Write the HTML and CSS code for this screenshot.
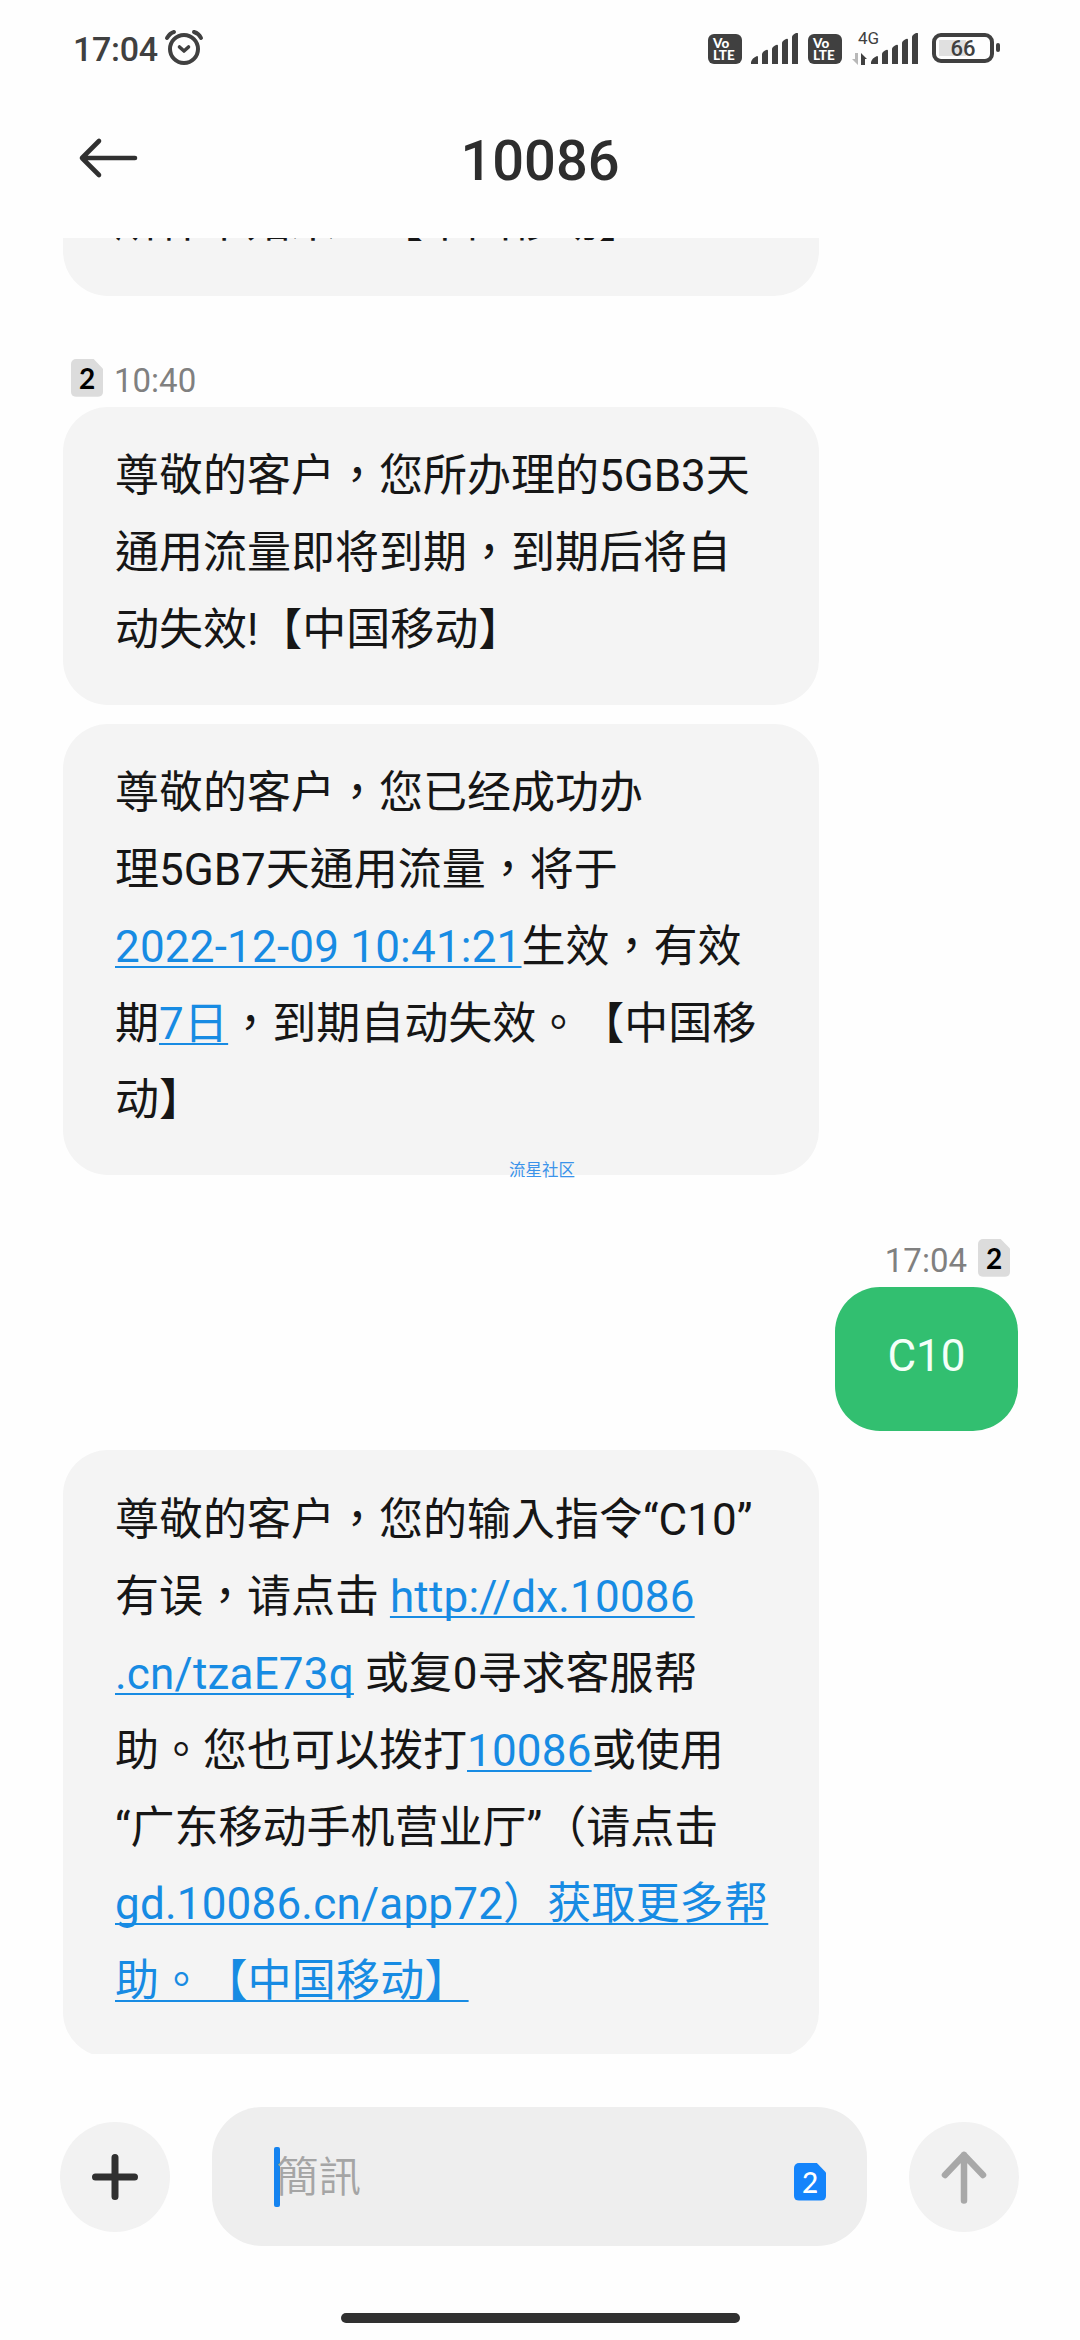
FILE: index.html
```
<!DOCTYPE html>
<html lang="zh-TW">
<head>
<meta charset="utf-8">
<title>10086</title>
<link rel="stylesheet" href="styles.css">
</head>
<body>
<div class="screen">
  <header class="status">
    <span class="clock">17:04</span>
    <svg class="alarm" width="42" height="40" viewBox="0 0 42 40" fill="none" stroke="#404040" stroke-linecap="round" stroke-linejoin="round"><circle cx="21" cy="21" r="14" stroke-width="4"/><path d="M16.500 19l4.500 4 4.500-4" stroke-width="3.600"/><path d="M4 10q3-5 7-6M31 4q5 1.500 7 6" stroke-width="4"/></svg>
    <div class="indicators">
      <span class="volte"><span>Vo</span><span>LTE</span></span>
      <svg class="bars" width="48" height="32" viewBox="0 0 48 32" fill="#404040"><path d="M0 31v-2q1-4 6-6q1 0 1 1v7zM11 31V21q0-2 4-4q2-1 2 1v13zM21 31V16q0-2 4-4q2-1 2 1v18zM31 31V10q0-2 4-4q2-1 2 1v24zM41 31V4q0-2 4-4q2-1 2 1v30z"/></svg>
      <span class="volte"><span>Vo</span><span>LTE</span></span>
      <div class="mobile">
        <svg width="16" height="12" viewBox="0 0 16 12"><path d="M6 0v12L0 6h3V0z" fill="#b8b8b8"/><path d="M9 12V0l6 6h-2v6z" fill="#404040"/></svg>
        <svg class="bars" width="48" height="32" viewBox="0 0 48 32" fill="#404040"><path d="M0 31v-2q1-4 6-6q1 0 1 1v7zM11 31V21q0-2 4-4q2-1 2 1v13zM21 31V16q0-2 4-4q2-1 2 1v18zM31 31V10q0-2 4-4q2-1 2 1v24zM41 31V4q0-2 4-4q2-1 2 1v30z"/></svg>
        <span class="net">4G</span>
      </div>
      <span class="battery"><span class="level">66</span></span><span class="nub"></span>
    </div>
  </header>
  <div class="titlebar">
    <svg width="60" height="42" viewBox="0 0 60 42" fill="none" stroke="#303030" stroke-width="4.600" stroke-linecap="round" stroke-linejoin="round"><path d="M21 4L4 21l17 17M4 21h53"/></svg>
    <h1>10086</h1>
  </div>
  <main class="thread">
    <div class="bubble clipped">所什下始来。【中国移动】</div>
    <div class="meta"><span class="sim">2</span><span class="time">10:40</span></div>
    <div class="bubble">尊敬的客户，您所办理的5GB3天<br>通用流量即将到期，到期后将自<br>动失效!【中国移动】</div>
    <div class="bubble second">尊敬的客户，您已经成功办<br>理5GB7天通用流量，将于<br><a>2022-12-09 10:41:21</a>生效，有效<br>期<a>7日</a>，到期自动失效。【中国移<br>动】<span class="watermark">流星社区</span></div>
    <div class="meta sent"><span class="time">17:04</span><span class="sim">2</span></div>
    <div class="bubble green">C10</div>
    <div class="bubble third">尊敬的客户，您的输入指令“C10”<br>有误，请点击 <a>http://dx.10086<br>.cn/tzaE73q</a> 或复0寻求客服帮<br>助。您也可以拨打<a>10086</a>或使用<br>“广东移动手机营业厅”（请点击<br><a>gd.10086.cn/app72）获取更多帮<br>助。【中国移动】</a></div>
  </main>
  <footer class="composer">
    <div class="round"><svg width="110" height="110" viewBox="0 0 110 110" stroke="#303030" stroke-width="7" stroke-linecap="round"><path d="M55 35.500v39M35.500 55h39"/></svg></div>
    <div class="field"><span class="caret"></span><span class="hint">簡訊</span><span class="sim blue">2</span></div>
    <div class="round"><svg width="110" height="110" viewBox="0 0 110 110" fill="none" stroke="#a8a8a8" stroke-width="6.500" stroke-linecap="round" stroke-linejoin="round"><path d="M55 78.500V33M36 53l19-20 19 20"/></svg></div>
  </footer>
  <div class="homebar"></div>
</div>
</body>
</html>
```
FILE: styles.css
```
* { box-sizing: border-box; }
body { margin: 0; background: #fefefe; font-family: Roboto, "Noto Sans CJK TC", sans-serif; text-spacing-trim: space-all; }
.screen { width: 1080px; height: 2340px; display: flex; flex-direction: column; overflow: hidden; }
.status { height: 100px; padding: 0 80px 0 73px; display: flex; align-items: flex-start; color: #404040; flex: none; }
.clock { font-size: 34px; font-weight: 480; line-height: 40px; margin-top: 29px; width: 86px; letter-spacing: -.3px; }
.alarm { margin: 28px 0 0 4px; }
.indicators { margin-left: auto; display: flex; padding-top: 33px; }
.volte { width: 34px; height: 30px; border-radius: 6px; background: #404040; color: #fff; font: 900 13.500px/12px Lato, sans-serif; display: flex; flex-direction: column; padding: 3px 0 0 5px; margin-top: 1px; }
.bars { margin: 0 0 0 9px; }
.bars + .volte { margin-left: 9px; }
.mobile { position: relative; display: flex; align-items: flex-end; margin: 0 13px 0 10px; height: 32px; }
.mobile .bars { margin-left: 3px; }
.net { position: absolute; left: 6px; top: -3px; font-size: 17px; line-height: 16px; }
.battery { width: 62px; height: 30px; border: 4px solid #404040; border-radius: 9px; padding: 3px; }
.level { display: block; height: 16px; background: linear-gradient(90deg, #e0e0e0 56%, transparent 56%); font-size: 22px; font-weight: 500; line-height: 18px; text-align: center; }
.nub { width: 4px; height: 9px; border-radius: 2px; background: #404040; margin: 10px 0 0 2px; }
.titlebar { height: 138px; flex: none; display: grid; grid-template-columns: 60px 1fr 60px; padding: 0 78px; align-items: start; }
.titlebar svg { margin-top: 37px; }
.titlebar h1 { margin: 28px 0 0; font-size: 56px; line-height: 66px; font-weight: 480; color: #2d2d2d; text-align: center; }
.thread { height: 1816px; flex: none; overflow: hidden; padding: 0 62px 0 63px; display: flex; flex-direction: column; align-items: flex-start; }
.bubble { width: 756px; flex: none; border-radius: 45px; background: #f4f4f4; color: #161616; font-size: 44px; line-height: 76.800px; padding: 31.500px 0 36px 52px; white-space: nowrap; position: relative; }
.bubble a { color: #178be3; letter-spacing: .2px; text-decoration: underline; text-decoration-thickness: 2px; text-underline-offset: 4px; text-decoration-skip-ink: none; }
.clipped { margin-top: -86px; }
.meta { height: 42px; margin: 60.500px 0 8px 8px; display: flex; align-items: center; gap: 11px; font-size: 33px; color: #808080; flex: none; }
.time { padding-top: 5px; }
.sim { width: 32px; height: 38px; flex: none; border-radius: 5px; background: #dcdcdc; clip-path: polygon(0 0, 70% 0, 100% 26%, 100% 100%, 0 100%); color: #000; font: 700 28px/38px Lato, sans-serif; text-align: center; }
.second { margin-top: 19px; }
.third { margin-top: 19.500px; }
.bubble.third { padding-top: 32px; padding-bottom: 36.500px; }
.meta.sent { margin: 61.500px 8px 8px auto; }
.green { width: 183px; margin-left: auto; background: #32bf70; color: #f4fff8; text-align: center; padding-left: 0; padding-right: 0; }
.watermark { position: absolute; left: 446px; bottom: -6px; font-size: 16.500px; line-height: 20px; color: #3b93ea; }
.composer { height: 226px; flex: none; display: flex; justify-content: space-between; padding: 53px 61px 0 60px; }
.round { width: 110px; height: 110px; border-radius: 50%; background: #f2f2f2; margin-top: 15px; }
.field { width: 655px; height: 139px; border-radius: 50px; background: #eee; display: flex; align-items: center; padding: 0 41px 0 62px; }
.caret { width: 6px; height: 60px; border-radius: 2px; background: #1483f0; }
.hint { font-size: 42.500px; font-weight: 350; color: #a5a5a5; line-height: 60px; margin: 3px 0 0 -4px; }
.blue { margin: 10px 0 0 auto; background: #1484fb; color: #fff; font-weight: 500; }
.homebar { width: 399px; height: 10px; border-radius: 5px; background: #303030; margin: 33px auto 0; }
```
